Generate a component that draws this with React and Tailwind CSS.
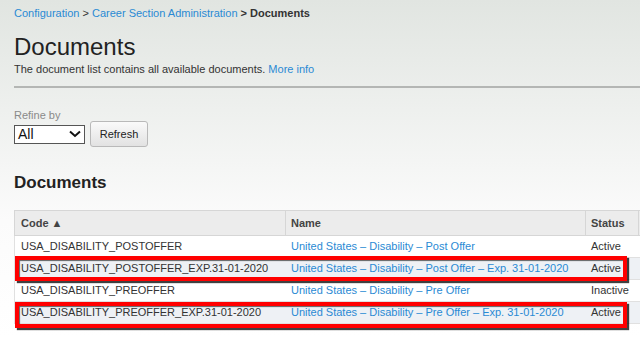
import React from 'react'

const rows = [
  { code: 'USA_DISABILITY_POSTOFFER', name: 'United States – Disability – Post Offer', status: 'Active', alt: false },
  { code: 'USA_DISABILITY_POSTOFFER_EXP.31-01-2020', name: 'United States – Disability – Post Offer – Exp. 31-01-2020', status: 'Active', alt: true },
  { code: 'USA_DISABILITY_PREOFFER', name: 'United States – Disability – Pre Offer', status: 'Inactive', alt: false },
  { code: 'USA_DISABILITY_PREOFFER_EXP.31-01-2020', name: 'United States – Disability – Pre Offer – Exp. 31-01-2020', status: 'Active', alt: true },
]

export default function App() {
  return (
    <div
      className="w-[640px] h-[337px] overflow-hidden bg-[linear-gradient(to_bottom,#e1e5e1_0px,#eef0ee_110px,#fbfbfb_220px,#ffffff_337px)] text-[#333] text-[11px]"
      style={{ fontFamily: 'Arial, "Liberation Sans", sans-serif' }}
    >
      {/* Breadcrumb */}
      <div className="pl-[14px] pt-[6px] h-[20px] leading-[14px]">
        <span className="text-[#2a8ad4]">Configuration</span>
        <span className="text-[#333]"> &gt; </span>
        <span className="text-[#2a8ad4]">Career Section Administration</span>
        <span className="text-[#333] font-bold"> &gt; Documents</span>
      </div>

      {/* Title */}
      <div className="pl-[14px] pt-[13px]">
        <h1 className="text-[24px] leading-[28px] text-[#222] font-normal">Documents</h1>
        <p className="leading-[14px] mt-[1px]">
          The document list contains all available documents. <span className="text-[#2a8ad4]">More info</span>
        </p>
      </div>
      <div className="ml-[14px] mt-[10px] h-[2px] bg-[#b4b6b4]" />

      {/* Refine */}
      <div className="pl-[14px] pt-[21px]">
        <div className="text-[#8a8a8a] leading-[13px]">Refine by</div>
        <div className="flex items-center gap-[5px] mt-[-1px]">
          <div className="w-[71px] h-[19px] border border-[#555] bg-white flex items-center justify-between pl-[3px] pr-[3px]">
            <span className="text-[14px] leading-[16px] text-[#111]">All</span>
            <svg width="12" height="8" viewBox="0 0 12 8">
              <path d="M1 1.5 L6 6 L11 1.5" fill="none" stroke="#111" strokeWidth="2" />
            </svg>
          </div>
          <div className="w-[58px] h-[26px] rounded-[3px] border border-[#b9b9b9] bg-[linear-gradient(to_bottom,#fafafa,#e2e2e2)] flex items-center justify-center text-[#222]">
            Refresh
          </div>
        </div>
      </div>

      <h2 className="pl-[14px] pt-[26px] text-[17px] leading-[20px] font-bold text-[#222]">Documents</h2>

      {/* Table */}
      <div className="relative ml-[14px] mt-[17px] w-[680px]">
        <div className="flex h-[26px] bg-[#ececec] border-t border-l border-b border-[#d6d6d6] font-bold text-[#444] items-center">
          <div className="w-[271px] pl-[6px] h-full flex items-center border-r border-[#d6d6d6]">Code ▲</div>
          <div className="w-[300px] pl-[5px] h-full flex items-center border-r border-[#d6d6d6]">Name</div>
          <div className="w-[53px] pl-[5px] h-full flex items-center border-r border-[#d6d6d6]">Status</div>
          <div className="flex-1" />
        </div>
        {rows.map((r) => (
          <div
            key={r.code}
            className={`flex h-[22px] items-center border-l border-b border-[#e0e0e0] ${r.alt ? 'bg-[#eef1f5]' : 'bg-white'}`}
          >
            <div className="w-[271px] pl-[6px] text-[#333]">{r.code}</div>
            <div className="w-[300px] pl-[5px] text-[#2a8ad4]">{r.name}</div>
            <div className="w-[53px] pl-[5px] text-[#333]">{r.status}</div>
            <div className="flex-1" />
          </div>
        ))}

        {/* Highlight boxes */}
        <div className="absolute left-[1px] top-[46px] w-[612px] h-[25px] border-[4px] border-[#f00] shadow-[2px_2px_1px_rgba(0,0,0,0.75),inset_1px_1px_1px_rgba(0,0,0,0.6)]" />
        <div className="absolute left-[1px] top-[92px] w-[612px] h-[26px] border-[4px] border-[#f00] shadow-[2px_2px_1px_rgba(0,0,0,0.75),inset_1px_1px_1px_rgba(0,0,0,0.6)]" />
      </div>
    </div>
  )
}
